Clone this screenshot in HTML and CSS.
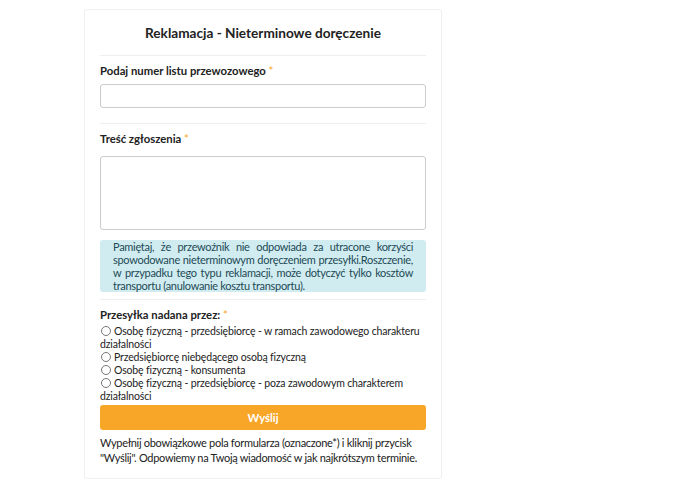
FILE: index.html
```html
<!DOCTYPE html>
<html lang="pl">
<head>
    <meta charset="UTF-8">
    <meta name="viewport" content="width=device-width, initial-scale=1.0">
    <title>Reklamacja - Nieterminowe doręczenie</title>
    <link rel="stylesheet" href="styles.css">
</head>
<body>
    <!-- Formularz reklamacji -->
    <div class="card">
        <h1 class="card-title">Reklamacja - Nieterminowe doręczenie</h1>

        <div class="section">
            <label class="field-label" for="waybill">Podaj numer listu przewozowego <span class="req">*</span></label>
            <input id="waybill" class="text-input" type="text">
        </div>

        <div class="section section-tight">
            <label class="field-label" for="message">Treść zgłoszenia <span class="req">*</span></label>
            <textarea id="message" class="text-area"></textarea>
            <div class="info-box">
                Pamiętaj, że przewoźnik nie odpowiada za utracone korzyści spowodowane nieterminowym doręczeniem przesyłki.Roszczenie, w przypadku tego typu reklamacji, może dotyczyć tylko kosztów transportu (anulowanie kosztu transportu).
            </div>
        </div>

        <div class="section">
            <div class="field-label radio-label">Przesyłka nadana przez: <span class="req">*</span></div>
            <div class="radio-list">
                <label class="radio-item"><input type="radio" name="sender">Osobę fizyczną - przedsiębiorcę - w ramach zawodowego charakteru działalności</label>
                <label class="radio-item"><input type="radio" name="sender">Przedsiębiorcę niebędącego osobą fizyczną</label>
                <label class="radio-item"><input type="radio" name="sender">Osobę fizyczną - konsumenta</label>
                <label class="radio-item"><input type="radio" name="sender">Osobę fizyczną - przedsiębiorcę - poza zawodowym charakterem działalności</label>
            </div>
            <button class="submit-button" type="button">Wyślij</button>
            <p class="note">Wypełnij obowiązkowe pola formularza (oznaczone*) i kliknij przycisk "Wyślij". Odpowiemy na Twoją wiadomość w jak najkrótszym terminie.</p>
        </div>
    </div>
</body>
</html>
```

FILE: styles.css
```css
/* Ogólne */
body {
    margin: 0;
    padding: 9px 0 0 84px;
    font-family: Lato, "Noto Sans", sans-serif;
    background: #fff;
    color: #222;
}

/* Karta */
.card {
    width: 326px;
    padding: 0 15px 13px;
    border: 1px solid #efefef;
    border-radius: 3px;
}

.card-title {
    margin: 0;
    padding: 14px 0 13px;
    font-size: 13.6px;
    font-weight: 700;
    line-height: 18px;
    text-align: center;
    border-bottom: 1px solid #eee;
}

.section {
    padding: 7px 0 15px;
    border-bottom: 1px solid #eee;
}

    .section-tight {
        padding-bottom: 7px;
    }

    .section:last-child {
        border-bottom: none;
        padding-bottom: 0;
    }

.field-label {
    display: block;
    margin: 0 0 6px;
    font-size: 11.3px;
    font-weight: 700;
    line-height: 15px;
}

    .radio-label {
        margin-bottom: 3px;
    }

.req {
    color: #f8a628;
    font-weight: 400;
}

.text-input,
.text-area {
    display: block;
    box-sizing: border-box;
    width: 100%;
    margin: 0;
    border: 1px solid #ccc;
    border-radius: 3px;
    background: #fff;
    font-family: inherit;
}

.text-input {
    height: 24px;
}

.text-area {
    height: 74px;
    margin-top: 10px;
    resize: none;
}

/* Informacja */
.info-box {
    box-sizing: border-box;
    height: 52px;
    margin-top: 10px;
    padding: 0 13px;
    background: #d1ecf1;
    border-radius: 3px;
    color: #1d4a55;
    font-size: 11px;
    line-height: 13px;
    letter-spacing: -0.3px;
    text-align: justify;
}

/* Radio */
.radio-list {
    font-size: 10.5px;
    line-height: 13px;
    letter-spacing: -0.15px;
}

.radio-item {
    display: block;
}

    .radio-item input {
        width: 10px;
        height: 10px;
        margin: 0 3px 0 1px;
        vertical-align: -1px;
    }

.submit-button {
    display: block;
    width: 100%;
    height: 25px;
    margin-top: 2px;
    border: none;
    border-radius: 3px;
    background: #f8a628;
    color: #fff;
    font-family: inherit;
    font-size: 11.3px;
    font-weight: 700;
}

.note {
    margin: 5px 0 0;
    font-size: 11px;
    line-height: 15px;
    letter-spacing: -0.3px;
}
```
